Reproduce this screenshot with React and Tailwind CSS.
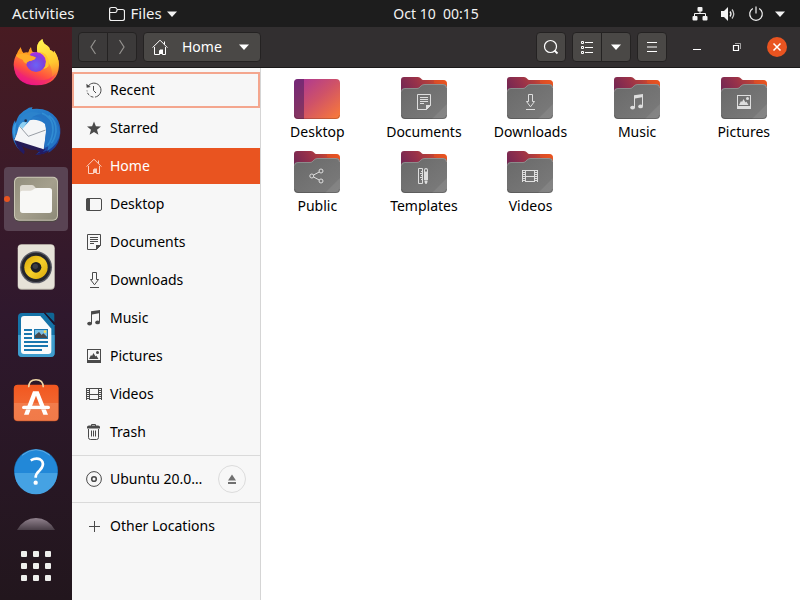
import React from "react";

const FONT = "font-['Noto_Sans','Open_Sans',sans-serif]";

/* Symbolic glyphs, all on a 16 x 16 grid and painted in the current colour. */
const glyphs = {
  recent: (
    <g fill="none" stroke="currentColor">
      <path d="M2 4.500A7 7 0 1 1 1 8.500" strokeDasharray="28 1.500 3 1.500 3 1.500 3 1.500" />
      <path d="M7.500 4v4.500l2.500 2.500" />
      <path d="M.3 1.800l.4 4 4-.8z" fill="currentColor" stroke="none" />
    </g>
  ),
  star: <path fill="currentColor" d="M8 1.500l1.900 4.800 5.100.2-4 3.200 1.400 5L8 11.900l-4.400 2.800 1.400-5-4-3.200 5.100-.2z" />,
  home: (
    <g fill="none" stroke="currentColor">
      <path d="M.6 8.600L8 1.200l7.400 7.400M12.500 2.500v3M2.500 8v7.500h5v-4h3v4M13.500 8v7.500h-3" />
      <path d="M8 10.500h3V15H8z" fill="currentColor" stroke="none" />
    </g>
  ),
  desktop: (
    <g>
      <rect x=".5" y="2.500" width="15" height="12" rx="1.500" fill="none" stroke="currentColor" />
      <path d="M2 2h2v13H2q-2 0-2-2V4q0-2 2-2z" fill="currentColor" />
    </g>
  ),
  documents: (
    <g fill="none" stroke="currentColor">
      <path d="M1.500.5h13v11l-4 4h-9z" />
      <path d="M4 3.500h8M4 5.500h8M4 7.500h8M4 9.500h4" />
      <path d="M10 16v-5h5z" fill="currentColor" stroke="none" />
    </g>
  ),
  downloads: (
    <path d="M6.500.5h4v7h2L8.500 12.800 4.500 7.500h2zM4 15.500h9" fill="none" stroke="currentColor" />
  ),
  music: (
    <g fill="currentColor">
      <path d="M5 1.200L14 0v12h-1V3.200L6 4.400V14H5z" />
      <ellipse cx="3.600" cy="13.600" rx="2.400" ry="1.900" />
      <ellipse cx="11.600" cy="12.400" rx="2.400" ry="1.900" />
    </g>
  ),
  pictures: (
    <g>
      <path d="M1 1h14v14H1zM2 2v10h12V2z" fill="currentColor" fillRule="evenodd" />
      <path d="M3 11l2-4 1 1 1.500-3 2 3.500.8-1L12.500 11z" fill="currentColor" />
      <circle cx="11.500" cy="4.500" r="1.500" fill="currentColor" />
    </g>
  ),
  videos: (
    <g fill="none" stroke="currentColor">
      <path d="M3 2.500h10M3 8.500h10M3 13.500h10M.5 2v12M3.500 2v12M12.500 2v12M15.500 2v12" />
      <path d="M2 2v12M14 2v12" strokeWidth="2" strokeDasharray="1 1" />
    </g>
  ),
  trash: (
    <g fill="none" stroke="currentColor">
      <path d="M5.500 2V.5h4V2M2.500 5v8.500q0 2 2 2h6q2 0 2-2V5M5.500 6.500v6M7.500 6.500v6M9.500 6.500v6" />
      <path d="M1 4.500V3q0-1.500 2-1.500h9Q14 1.500 14 3v1.500z" fill="currentColor" stroke="none" />
    </g>
  ),
  disc: (
    <g fill="none" stroke="currentColor">
      <circle cx="8" cy="8" r="7.400" />
      <circle cx="8" cy="8" r="2.300" strokeWidth="1.600" />
    </g>
  ),
  plus: <path d="M8.500 3v11M3 8.500h11" stroke="currentColor" fill="none" />,
  eject: <path d="M8 3.500l4 6H4zM4 11h8v2H4z" fill="currentColor" />,
  share: (
    <g fill="none" stroke="currentColor">
      <circle cx="2.800" cy="8" r="2" />
      <circle cx="12" cy="3" r="2" />
      <circle cx="12" cy="13" r="2" />
      <path d="M4.600 7l5.600-3M4.600 9l5.600 3" />
    </g>
  ),
  templates: (
    <g fill="none" stroke="currentColor">
      <path d="M2.500.5h4v15h-4zM5 3.500h1.500M4 5.500h2.500M5 7.500h1.500M4 9.500h2.500M5 11.500h1.500" />
      <path d="M8 2q0-2 2-2t2 2v10H8zM8.500 12.500h3v1.500l-1 2h-1l-1-2z" fill="currentColor" stroke="none" />
      <path d="M10 1.500v2" stroke="#707070" strokeWidth="2" />
    </g>
  ),
  search: (
    <g fill="none" stroke="currentColor">
      <circle cx="7.500" cy="7.500" r="6" strokeWidth="1.200" />
      <path d="M11.500 11.500l3 3" strokeWidth="1.800" />
    </g>
  ),
  list: (
    <g fill="none" stroke="currentColor">
      <path d="M2.500 2.500h2v2h-2zM2.500 7.500h2v2h-2zM2.500 12.500h2v2h-2zM6 3.500h8M6 8.500h8M6 13.500h8" />
    </g>
  ),
  menu: <path d="M3 3.500h10M3 8h10M3 12.500h10" stroke="currentColor" fill="none" />,
  caret: <path d="M3 5.500h10L8 11z" fill="currentColor" />,
  back: <path d="M10.500 1L6 8l4.500 7" stroke="currentColor" fill="none" strokeWidth="1.200" />,
  forward: <path d="M5.500 1L10 8l-4.500 7" stroke="currentColor" fill="none" strokeWidth="1.200" />,
  minimise: <path d="M4 10.500h8" stroke="currentColor" fill="none" />,
  restore: (
    <g fill="none" stroke="currentColor">
      <path d="M4.500 6.500h5v5h-5z" strokeWidth="1.200" />
      <path d="M6 4.500h5.500V10" opacity=".55" />
    </g>
  ),
  close: <path d="M4.500 4.500l7 7M11.500 4.500l-7 7" stroke="currentColor" fill="none" strokeWidth="1.500" />,
  folder: (
    <path
      d="M.6 12.500V3.500Q.6 1.500 2.600 1.500H6q1 0 1.500 1l.8 1H13.500q2 0 2 2v7q0 2-2 2h-11q-1.900 0-1.900-2zM.6 6.500h5.500q1 0 1.500-1l.7-2"
      fill="none"
      stroke="currentColor"
      strokeWidth="1.200"
    />
  ),
  network: (
    <g fill="currentColor">
      <rect x="5.500" y="1" width="5" height="4.500" rx="1" />
      <rect x=".5" y="10" width="5" height="4.500" rx="1" />
      <rect x="10.500" y="10" width="5" height="4.500" rx="1" />
      <path d="M2.500 10.500v-3h11v3M8 5v3" fill="none" stroke="currentColor" />
    </g>
  ),
  volume: (
    <g fill="none" stroke="currentColor">
      <path d="M1 5h3l4-4v14l-4-4H1z" fill="currentColor" stroke="none" />
      <path d="M10 5.500q2 2.500 0 5" strokeWidth="1.300" />
      <path d="M12 3.500q3.500 4.500 0 9" strokeWidth="1.300" opacity=".8" />
    </g>
  ),
  power: (
    <path d="M4.800 2.600a6.300 6.300 0 1 0 6.400 0M8 .5v7" fill="none" stroke="currentColor" strokeWidth="1.200" />
  ),
};

function Glyph({ name, className = "" }) {
  return (
    <svg viewBox="0 0 16 16" aria-hidden="true" className={`size-4 shrink-0 ${className}`}>
      {glyphs[name]}
    </svg>
  );
}

function Folder({ emblem }) {
  return (
    <svg viewBox="0 0 48 48" aria-hidden="true" className="size-12">
      <defs>
        <linearGradient id="folderBack" x1="0" y1=".6" x2="1" y2=".3">
          <stop offset="0" stopColor="#702654" />
          <stop offset=".4" stopColor="#97314a" />
          <stop offset=".65" stopColor="#b23d3c" />
          <stop offset="1" stopColor="#e95420" />
        </linearGradient>
        <linearGradient id="folderFront" x1="0" y1="0" x2="1" y2="1">
          <stop offset="0" stopColor="#696969" />
          <stop offset="1" stopColor="#7c7c7c" />
        </linearGradient>
        <linearGradient id="wallpaper" x1="0" y1="0" x2="1" y2="1">
          <stop offset="0" stopColor="#a8349a" />
          <stop offset=".5" stopColor="#cf5268" />
          <stop offset="1" stopColor="#fb7c37" />
        </linearGradient>
      </defs>
      {emblem === "desktop" ? (
        <g>
          <rect x="1" y="7" width="46" height="40" rx="4" fill="url(#wallpaper)" />
          <path d="M5 7h6v40H5q-4 0-4-4V11q0-4 4-4z" fill="#481d5c" opacity=".55" />
          <path d="M1.500 43q0 3.500 3.500 3.500h38q3.500 0 3.500-3.500" fill="none" stroke="#000" opacity=".18" />
        </g>
      ) : (
        <g>
          <path d="M1 28V8q0-3 3-3h14q2 0 3 1.500T23.500 8H43q4 0 4 4v16z" fill="url(#folderBack)" />
          <path d="M34 8h9q4 0 4 4v3L34 11z" fill="#e95420" opacity=".5" />
          <path d="M1 20q0-4 4-4h12q1.500 0 2.500-1l1.500-1.500Q22.500 12 24.500 12H43q4 0 4 4v27q0 4-4 4H5q-4 0-4-4z" fill="url(#folderFront)" />
          <path d="M47 32v11q0 4-4 4H32z" fill="#fff" opacity=".08" />
          <path d="M1.500 19.500q0-3 3.500-3h12q1.500 0 2.500-1l1.500-1.500q1.500-1.500 3.500-1.500H43q3.500 0 3.500 3.500" fill="none" stroke="#fff" opacity=".22" />
          <path d="M1.500 43q0 3.500 3.500 3.500h38q3.500 0 3.500-3.500" fill="none" stroke="#000" opacity=".2" />
          <g transform="translate(16 22)" className="text-[#dedede]">{glyphs[emblem]}</g>
        </g>
      )}
    </svg>
  );
}

/* Launcher artwork: each drawing has its own 192-unit square. */
const launchers = [
  {
    name: "Firefox",
    box: "12 3 192 192",
    art: (
      <g>
        <defs>
          <linearGradient id="foxBody" x1=".8" y1=".1" x2=".4" y2="1">
            <stop offset="0" stopColor="#ffdc3a" />
            <stop offset=".4" stopColor="#ff9a30" />
            <stop offset=".72" stopColor="#ff5040" />
            <stop offset="1" stopColor="#e5108a" />
          </linearGradient>
          <linearGradient id="foxFlame" x1=".4" y1="0" x2=".6" y2="1">
            <stop offset="0" stopColor="#fff44f" />
            <stop offset=".6" stopColor="#ffc830" />
            <stop offset="1" stopColor="#ff9a2a" stopOpacity="0" />
          </linearGradient>
          <radialGradient id="foxGlobe" cx=".5" cy=".65" r=".6">
            <stop offset="0" stopColor="#6a63f5" />
            <stop offset=".7" stopColor="#8040dc" />
            <stop offset="1" stopColor="#a830e0" />
          </radialGradient>
        </defs>
        <path d="M62 52q2 12 8 17 8-3 15-1 3-11 8-16 0 9 4 13 7 1 15 3-6-27 15-41 2 15 15 20 7 4 8 13 9 2 10 8 2-3 2-6 14 19 15 42-2 61-68 62-65-2-68-62 1-20 10-33 0 4 1 8 3-15 10-27z" fill="url(#foxBody)" />
        <path d="M42 108q4 54 66 56 46-2 62-36-20 24-54 23-44-1-74-43z" fill="#f0207c" opacity=".55" />
        <path d="M112 68q-6-27 15-41 2 15 15 20 7 4 8 13 9 2 10 8 2-3 2-6 14 19 15 42-3 30-24 48 8-24-2-44l-14-26z" fill="url(#foxFlame)" />
        <circle cx="108" cy="96" r="30" fill="url(#foxGlobe)" />
        <path d="M112 66q24 3 26 28 0 14-8 23 8 0 16-9 2-24-10-35-10-8-24-7z" fill="#ffc42e" />
        <path d="M62 52q2 12 8 17 8-3 15-1 3-11 8-16 0 9 4 13-7 4-8 11l18 6q0 8-14 10-11 1-14 9-9-4-12-14-8-2-19-10 5-14 14-25z" fill="#ff9c20" />
        <path d="M48 78q11-10 30-5l29 9q-2 8-14 10-12 1-14 9-8-3-11-12-11-3-20-11z" fill="#ffad28" />
      </g>
    ),
  },
  {
    name: "Thunderbird",
    box: "12 207 192 192",
    art: (
      <g>
        <defs>
          <linearGradient id="birdBody" x1=".2" y1="0" x2=".8" y2="1">
            <stop offset="0" stopColor="#2b86cf" />
            <stop offset=".5" stopColor="#2272c4" />
            <stop offset="1" stopColor="#1a3590" />
          </linearGradient>
        </defs>
        <path d="M80 238q7-7 18-6-3 3-2 5 48-6 73 27 14 19 12 46-2 33-25 51-5 6-12 7l3-6q-12 10-40 12l12-10-46-32-28-22q4 26 16 52-24-21-25-55 0-22 9-36l2 8q8-30 33-41z" fill="url(#birdBody)" />
        <path d="M42 318q8 16 20 22l12 24-2 9q-26-18-30-55zM96 352l40 6-8 9 20-8q-8 14-44 16l16-8z" fill="#231b62" />
        <path d="M57 288l18-14q34-12 60 8l4 22-8 54q-60-9-88-27 10-24 14-43z" fill="#f4f5f7" />
        <path d="M59 289l26 30 52-19" fill="none" stroke="#858c95" strokeWidth="2.500" />
        <path d="M43 330l88 28-35 2q-34-8-53-30z" fill="#261c56" />
        <path d="M54 292q0-30 26-42 22-9 44 2-27 4-38 23l-15 16q-5-5-17 1z" fill="#2c83cc" />
        <path d="M56 290q4-8 12-14l13 1-13 20q-4-8-12-7z" fill="#8fd0f2" />
        <circle cx="77" cy="272" r="4" fill="#22314e" />
        <path d="M96 262q30-8 40 20 5 14 1 30l-4 42 12-5-3 14q36-22 38-56-3-35-32-50-24-12-52 5z" fill="#2474c4" />
        <path d="M126 250q34 12 33 50-2 28-16 46M146 256q24 16 22 48-3 22-14 36" fill="none" stroke="#3da0de" strokeWidth="5" opacity=".55" />
        <path d="M39 294q3-11 10-17-4 20-2 40l-4 10q-5-16-4-33z" fill="#3b9ce0" />
      </g>
    ),
  },
  {
    name: "Files",
    active: true,
    box: "12 411 192 192",
    art: (
      <g>
        <defs>
          <linearGradient id="filesTile" x1="0" y1="0" x2="1" y2="1">
            <stop offset="0" stopColor="#928e7c" />
            <stop offset=".5" stopColor="#a5a08d" />
            <stop offset="1" stopColor="#8d8a78" />
          </linearGradient>
        </defs>
        <rect x="41" y="441" width="134" height="134" rx="16" fill="#4c4a42" />
        <rect x="42" y="440" width="132" height="132" rx="15" fill="#c9c5b4" />
        <rect x="45" y="443" width="126" height="126" rx="13" fill="url(#filesTile)" />
        <path d="M60 488v-15q0-8 8-8h27q5 0 8 4l5 6 40 15z" fill="#dedad0" />
        <path d="M60 488q0-6 7-6h24q6 0 10-4t10-4h37q8 0 8 8v59q0 8-8 8H68q-8 0-8-8z" fill="#f8f8f6" />
      </g>
    ),
  },
  {
    name: "Rhythmbox",
    box: "12 15 192 192",
    art: (
      <g>
        <defs>
          <linearGradient id="coneRing" x1="0" y1="0" x2="1" y2="1">
            <stop offset="0" stopColor="#d9a806" />
            <stop offset=".5" stopColor="#f6cf2c" />
            <stop offset="1" stopColor="#d9a806" />
          </linearGradient>
        </defs>
        <rect x="53" y="43" width="111" height="136" rx="12" fill="#b9b5aa" />
        <rect x="54" y="44" width="109" height="132" rx="11" fill="#e6e2d8" />
        <circle cx="108" cy="112" r="48" fill="#5b5c66" />
        <circle cx="108" cy="112" r="44" fill="#25262c" />
        <circle cx="108" cy="112" r="35" fill="url(#coneRing)" />
        <circle cx="108" cy="112" r="16" fill="#1d1e24" />
        <circle cx="106" cy="109" r="8" fill="#3a3c44" />
      </g>
    ),
  },
  {
    name: "LibreOffice Writer",
    box: "12 219 192 192",
    art: (
      <g>
        <path d="M66 249h66l32 37v83q0 12-12 12H66q-12 0-12-12V261q0-12 12-12z" fill="#1573a8" />
        <path d="M54 315h110v54q0 12-12 12H66q-12 0-12-12z" fill="#3f9dcd" />
        <path d="M136 248h21q6 0 6 6v24z" fill="#0f6594" />
        <path d="M132 249l31 37v-9l-28-29z" fill="#1a1630" />
        <path d="M72 258h49l33 38v67q0 9-9 9H72q-9 0-9-9v-96q0-9 9-9z" fill="#fbfbfb" />
        <path d="M72 300h24M72 312h24M72 324h24M72 336h72M72 348h72M72 360h54" stroke="#1a76ae" strokeWidth="5.500" />
        <rect x="102" y="297" width="42" height="30" fill="#1a76ae" />
        <rect x="105" y="300" width="36" height="24" fill="#79bfe5" />
        <circle cx="135" cy="305" r="4" fill="#f7dc58" />
        <path d="M105 324v-8l12-10 8 9 5-5 11 10v4z" fill="#46484c" />
      </g>
    ),
  },
  {
    name: "Ubuntu Software",
    box: "12 423 192 192",
    art: (
      <g>
        <defs>
          <linearGradient id="bag" x1="0" y1="0" x2="0" y2="1">
            <stop offset="0" stopColor="#f2571f" />
            <stop offset=".5" stopColor="#f1652f" />
            <stop offset=".5" stopColor="#f37c4b" />
            <stop offset="1" stopColor="#f07a49" />
          </linearGradient>
        </defs>
        <rect x="41" y="465" width="135" height="109" rx="12" fill="#b4471f" />
        <rect x="42" y="464" width="133" height="108" rx="11" fill="url(#bag)" />
        <path d="M86 472q0-23 22-23t22 23" fill="none" stroke="#f0d9a8" strokeWidth="4.500" />
        <path d="M99 484h17l28 70h-14l-22-57-22 57H72z" fill="#fff" />
        <rect x="66" y="527" width="84" height="11" rx="5.500" fill="#fff" />
        <path d="M68 539h80" stroke="#c9562c" strokeWidth="2" opacity=".5" />
      </g>
    ),
  },
  {
    name: "Help",
    box: "12 27 192 192",
    art: (
      <g>
        <circle cx="108" cy="123" r="66" fill="#186fb4" />
        <circle cx="108" cy="123" r="64" fill="#2288d8" />
        <path d="M44 129a64 64 0 0 0 128 0z" fill="#45a2e3" />
        <path d="M66 76q42-34 84 0" fill="none" stroke="#8ac6f0" strokeWidth="2.500" opacity=".7" />
        <path d="M92 91q16-8 28-3 11 6 8 19-2 8-10 15-11 9-11 21" fill="none" stroke="#fff" strokeWidth="8" />
        <circle cx="107" cy="158" r="6.500" fill="#fff" />
      </g>
    ),
  },
];

function Launcher({ name, box, art, active }) {
  return (
    <button
      type="button"
      aria-label={name}
      className={`relative size-16 shrink-0 rounded ${active ? "bg-[#594353]" : ""}`}
    >
      {active && <span className="absolute top-7 left-0 mt-px size-1.5 rounded-full bg-[#e95420]" />}
      <svg viewBox={box} aria-hidden="true" className="size-16">{art}</svg>
    </button>
  );
}

function Dock() {
  return (
    <nav aria-label="Dock" className="flex w-18 shrink-0 flex-col items-center gap-1 bg-linear-to-b from-[#481b22] via-[#2f182d] to-[#22161d] pt-1 pb-0.5">
      {launchers.map((item) => (
        <Launcher key={item.name} {...item} />
      ))}
      <div className="h-[23px] w-16 shrink-0 overflow-hidden">
        <svg viewBox="0 0 64 24" aria-hidden="true" className="h-6 w-16">
          <defs>
            <linearGradient id="discFade" x1="0" y1="0" x2="0" y2="1">
              <stop offset="0" stopColor="#91828e" />
              <stop offset="1" stopColor="#493e47" />
            </linearGradient>
          </defs>
          <path d="M13 23q7-12 19-12t19 12z" fill="url(#discFade)" />
        </svg>
      </div>
      <button type="button" aria-label="Show Applications" className="grid size-16 shrink-0 grid-cols-3 place-content-center gap-1.5 px-[17px]">
        {Array.from({ length: 9 }, (_, i) => (
          <span key={i} className="size-1.5 rounded-[1px] bg-[#eeeeec]" />
        ))}
      </button>
    </nav>
  );
}

/* The clock is centred over the window area, to the right of the dock. */
function TopBar() {
  return (
    <header className="grid h-[27px] shrink-0 grid-cols-[1fr_auto_1fr] items-center bg-[#1d1d1d] pr-3 pl-[84px] text-[15px] text-[#f2f2f2]">
      <div className="-ml-18 flex items-center gap-[34px]">
        <button type="button">Activities</button>
        <button type="button" className="flex items-center gap-1.5">
          <Glyph name="folder" />
          Files
          <Glyph name="caret" className="-ml-1" />
        </button>
      </div>
      <button type="button" className="whitespace-pre text-sm">Oct 10  00:15</button>
      <button type="button" aria-label="System" className="flex items-center gap-3 justify-self-end">
        <Glyph name="network" />
        <Glyph name="volume" />
        <Glyph name="power" />
        <Glyph name="caret" className="-ml-1" />
      </button>
    </header>
  );
}

const raised = "border border-[#242222] bg-[#4a4846]";

function ToolButton({ label, icon, className }) {
  return (
    <button type="button" aria-label={label} className={`flex h-[30px] w-[30px] items-center justify-center ${className}`}>
      <Glyph name={icon} />
    </button>
  );
}

function WindowButton({ label, icon, className = "" }) {
  return (
    <button type="button" aria-label={label} className="flex w-10 items-center justify-center">
      <span className={`flex size-5 items-center justify-center rounded-full ${className}`}>
        <Glyph name={icon} />
      </span>
    </button>
  );
}

function HeaderBar() {
  return (
    <div className="flex h-[41px] shrink-0 items-center gap-1.5 border-b border-[#1b1a1a] bg-[#322f30] pr-[3px] pl-1.5 text-white">
      <div className="flex">
        <ToolButton label="Back" icon="back" className="rounded-l border border-[#242222] bg-[#3c3a3a] text-[#94928f]" />
        <ToolButton label="Forward" icon="forward" className="-ml-px rounded-r border border-[#242222] bg-[#3c3a3a] text-[#94928f]" />
      </div>
      <button type="button" className={`flex h-[30px] w-[118px] items-center rounded px-2 text-sm ${raised}`}>
        <Glyph name="home" />
        <span className="ml-3.5">Home</span>
        <Glyph name="caret" className="ml-auto" />
      </button>
      <div className="ml-auto flex items-center gap-1.5">
        <ToolButton label="Search" icon="search" className={`rounded ${raised}`} />
        <div className="flex">
          <ToolButton label="List view" icon="list" className={`rounded-l ${raised}`} />
          <ToolButton label="View options" icon="caret" className={`-ml-px rounded-r ${raised}`} />
        </div>
        <ToolButton label="Menu" icon="menu" className={`rounded ${raised}`} />
      </div>
      <div className="ml-1 flex">
        <WindowButton label="Minimise" icon="minimise" />
        <WindowButton label="Restore" icon="restore" />
        <WindowButton label="Close" icon="close" className="bg-[#e95420]" />
      </div>
    </div>
  );
}

const places = [
  ["Recent", "recent"],
  ["Starred", "star"],
  ["Home", "home"],
  ["Desktop", "desktop"],
  ["Documents", "documents"],
  ["Downloads", "downloads"],
  ["Music", "music"],
  ["Pictures", "pictures"],
  ["Videos", "videos"],
  ["Trash", "trash"],
];

function placeStyle(name) {
  if (name === "Home") return "bg-[#e95420] text-white";
  if (name === "Recent") return "outline-2 -outline-offset-2 outline-[#f4a68e]";
  return "";
}

function Place({ name, icon }) {
  return (
    <button type="button" className={`flex h-9 w-full items-center gap-2 px-3.5 ${placeStyle(name)}`}>
      <Glyph name={icon} className={name === "Home" ? "text-[#fbd0c0]" : "text-[#4a4a4a]"} />
      {name}
    </button>
  );
}

function Sidebar() {
  return (
    <aside className="w-[189px] shrink-0 border-r border-[#d5d5d5] bg-[#f7f7f7] pt-1 text-sm text-black">
      <div className="flex flex-col gap-0.5 pb-[5px]">
        {places.map(([name, icon]) => (
          <Place key={name} name={name} icon={icon} />
        ))}
      </div>
      <div className="flex h-12 items-center border-y border-[#dadada] px-3.5">
        <button type="button" className="flex min-w-0 flex-1 items-center gap-2 whitespace-nowrap">
          <Glyph name="disc" className="text-[#4a4a4a]" />
          Ubuntu 20.0…
        </button>
        <button type="button" aria-label="Eject" className="flex size-7 items-center justify-center rounded-full border border-[#dcdcdc] text-[#707070]">
          <Glyph name="eject" />
        </button>
      </div>
      <div className="pt-[5px]">
        <Place name="Other Locations" icon="plus" />
      </div>
    </aside>
  );
}

const folders = [
  ["Desktop", "desktop"],
  ["Documents", "documents"],
  ["Downloads", "downloads"],
  ["Music", "music"],
  ["Pictures", "pictures"],
  ["Public", "share"],
  ["Templates", "templates"],
  ["Videos", "videos"],
];

function FileGrid() {
  return (
    <main className="grid flex-1 grid-cols-[repeat(auto-fill,minmax(100px,1fr))] content-start gap-y-1 bg-white px-[3px] pt-1">
      {folders.map(([name, emblem]) => (
        <button key={name} type="button" className="flex flex-col items-center gap-0.5 text-sm text-black">
          <Folder emblem={emblem} />
          {name}
        </button>
      ))}
    </main>
  );
}

export default function App() {
  return (
    <div className={`flex min-h-screen flex-col ${FONT}`}>
      <TopBar />
      <div className="flex flex-1">
        <Dock />
        <section aria-label="Files" className="flex min-w-0 flex-1 flex-col">
          <HeaderBar />
          <div className="flex flex-1">
            <Sidebar />
            <FileGrid />
          </div>
        </section>
      </div>
    </div>
  );
}
